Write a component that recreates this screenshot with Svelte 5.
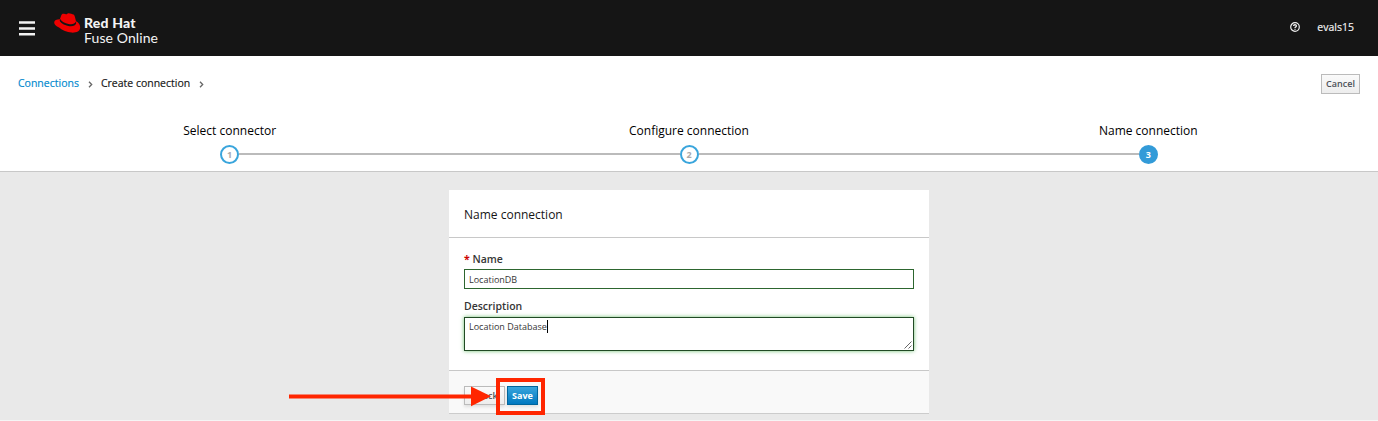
<script>
  const steps = ['Select connector', 'Configure connection', 'Name connection'];
  const current = 2;
</script>

<div class="page">
  <header class="masthead">
    <svg class="menu" width="16" height="15" viewBox="0 0 16 15" aria-hidden="true">
      <path d="M0 1.500h16M0 7.500h16M0 13.200h16" stroke="#f2f2f2" stroke-width="2.500" />
    </svg>
    <div class="brand">
      <svg class="hat" width="27" height="21" viewBox="0 0 27 21" aria-hidden="true">
        <path fill="#e00" d="M7.200 2.600C7.700 1 8.600.5 10 .8L12 1.300C13 1.500 13.300.3 14.500.2 16 .1 18.300.9 19.500 1.600 20.500 2.200 20.700 3.200 21 4.300L22 8.300C24.500 9.500 26.200 11.800 26.200 14.200 26.200 18.300 22 19.900 17.500 19.600 13 19.200 8.500 17.200 5 14.400 2.200 13.300.2 11.600.2 9.500.2 7.500 2.600 6.300 5.900 6.300z" />
        <path fill="#151515" d="M6.200 5.900C7.500 8.400 11 10.300 14.500 11 18 11.700 20.800 11.200 21.900 8.600L22.200 10.300C21.600 12.700 18.300 13.900 14.200 13 10 12.100 6.300 10 5.700 7.600z" />
      </svg>
      <div class="brand-text"><b>Red Hat</b><span>Fuse Online</span></div>
    </div>
    <svg class="help" width="10" height="10" viewBox="0 0 10 10" aria-hidden="true">
      <circle cx="5" cy="5" r="4.300" fill="none" stroke="#eee" stroke-width="1.200" />
      <path d="M3.500 4C3.600 2.300 6.500 2.400 6.400 4 6.400 4.900 5 4.900 5 6M5 6.700V7.800" fill="none" stroke="#eee" stroke-width="1.300" />
    </svg>
    <span class="user">evals15</span>
  </header>

  <nav class="crumbs">
    <a href="#connections">Connections</a>
    <svg width="5" height="7" viewBox="0 0 5 7"><path d="M1 .7 3.700 3.500 1 6.300" /></svg>
    <span>Create connection</span>
    <svg width="5" height="7" viewBox="0 0 5 7"><path d="M1 .7 3.700 3.500 1 6.300" /></svg>
    <button class="btn cancel">Cancel</button>
  </nav>

  <ol class="steps">
    {#each steps as step, i}
      <li class:active={i === current}>
        <span class="title">{step}</span>
        <span class="track"><span class="num">{i + 1}</span></span>
      </li>
    {/each}
  </ol>

  <main>
    <section class="card">
      <h2>Name connection</h2>
      <div class="fields">
        <label for="name"><i>*</i> Name</label>
        <div class="input" id="name">LocationDB</div>
        <label class="second" for="description">Description</label>
        <div class="area" id="description">
          <span>Location Database</span><span class="caret"></span>
          <svg class="grip" width="8" height="8" viewBox="0 0 8 8"><path d="M.5 7.500l7-7M4.500 7.500l3-3" stroke="#555" stroke-width=".9" /></svg>
        </div>
      </div>
      <footer>
        <button class="btn back">‹ Back</button>
        <button class="btn primary">Save</button>
      </footer>
      <svg class="pointer" width="258" height="40" viewBox="0 0 258 40" aria-hidden="true">
        <path d="M0 20.500H184" stroke="#ff2600" stroke-width="4.200" />
        <path d="M182 10.500 202 20.300 182 30.300z" fill="#ff2600" />
        <rect x="209" y="4" width="45" height="33" fill="none" stroke="#ff2600" stroke-width="4" />
      </svg>
    </section>
  </main>
</div>

<style>
  .page { height: 421px; display: flex; flex-direction: column; overflow: hidden; background: #fff; color: #151515; font-family: "Open Sans", "Noto Sans", sans-serif; font-size: 11px; }
  .page, .page * { box-sizing: border-box; }
  .masthead { height: 56px; flex: none; background: #151515; display: flex; align-items: center; padding: 0 24px 0 19px; color: #f4f4f4; }
  .brand { display: flex; margin-left: 19px; align-self: flex-start; padding-top: 13px; }
  .brand-text { display: flex; flex-direction: column; font-family: Lato, sans-serif; font-size: 14px; line-height: 15px; margin: 2px 0 0 3px; }
  .brand-text b { font-weight: 900; letter-spacing: .2px; }
  .brand-text span { white-space: nowrap; letter-spacing: .1px; }
  .help { margin-left: auto; margin-top: -2px; }
  .user { margin: -2px 0 0 17px; font-size: 10.500px; -webkit-text-stroke: .15px; }
  .crumbs { height: 56px; flex: none; display: flex; align-items: center; padding: 0 18px; }
  .crumbs a, .crumbs span { color: #0088ce; text-decoration: none; font-size: 10.500px; line-height: 15px; margin: -2px 9px 0 0; -webkit-text-stroke: .15px; }
  .crumbs span { color: #151515; margin-left: 8px; }
  .crumbs svg { margin-top: 0; }
  .crumbs svg path { fill: none; stroke: #666; stroke-width: 1.300; }
  .btn { font: 600 9px/12px "Open Sans", sans-serif; height: 20px; padding: 0; border: 1px solid #bbb; background: linear-gradient(#fafafa, #ededed); color: #4d5258; box-shadow: 0 2px 3px rgba(3,3,3,.1); }
  .cancel { margin-left: auto; width: 39px; box-shadow: none; }
  .steps { list-style: none; margin: 0; padding: 0; height: 60px; flex: none; display: flex; border-bottom: 1px solid #c8c8c8; }
  .steps li { flex: 1; display: flex; flex-direction: column; align-items: center; padding-top: 10px; }
  .title { font-size: 12px; line-height: 17px; color: #000; }
  .track { width: 100%; height: 20px; margin-top: 5px; display: flex; align-items: center; }
  .track::before, .track::after { content: ""; flex: 1; height: 2px; background: #bbb; }
  li:first-child .track::before, li:last-child .track::after { background: transparent; }
  .num { width: 19px; height: 19px; border: 2px solid #39a5dc; border-radius: 50%; color: #aaa; background: #fff; font-size: 9px; font-weight: 700; line-height: 16px; text-align: center; }
  .active .num { background: #339bd8; border-color: #339bd8; color: #fff; }
  main { flex: 1; background: #e9e9e9; display: flex; justify-content: center; align-items: flex-start; padding-top: 18px; border-bottom: 1px solid #f5f5f5; }
  .card { position: relative; width: 480px; height: 224px; background: #fff; display: flex; flex-direction: column; border-bottom: 1px solid #ccc; }
  h2 { margin: 0; height: 48px; flex: none; padding: 0 15px; border-bottom: 1px solid #c8c8c8; font-size: 12px; font-weight: 400; line-height: 49px; }
  .fields { height: 133px; flex: none; padding: 13px 15px 0; border-bottom: 1px solid #c8c8c8; display: flex; flex-direction: column; }
  label { height: 18px; line-height: 17px; font-size: 10.500px; font-weight: 600; color: #363636; }
  label i { color: #c00; font-style: normal; font-weight: 700; }
  .second { margin-top: 9px; height: 19px; }
  .input { height: 20px; border: 1px solid #2d662f; padding-left: 4px; font-size: 9px; line-height: 19px; color: #363636; flex: none; }
  .area { position: relative; display: flex; height: 34px; flex: none; border: 1px solid #214a24; box-shadow: 0 0 4px #6fbf70; padding: 2px 0 0 4px; font-size: 9px; line-height: 13px; color: #363636; }
  .caret { width: 1px; height: 13px; background: #000; }
  .grip { position: absolute; right: 1px; bottom: 1px; }
  footer { flex: 1; min-height: 0; background: #f9f9f9; padding: 15px 15px 0; display: flex; gap: 2px; }
  .back { width: 41px; height: 19px; }
  .primary { width: 31px; height: 19px; color: #fff; font-weight: 700; background: linear-gradient(#39a5dc, #0078c0); border-color: #00659c; }
  .pointer { position: absolute; left: -160px; top: 186px; }
</style>
